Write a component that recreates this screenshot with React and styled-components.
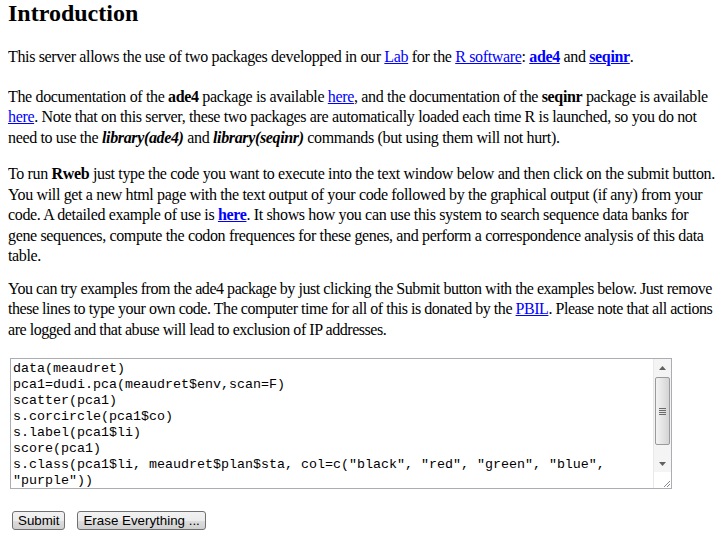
import React from "react";
import styled, { createGlobalStyle } from "styled-components";

const GlobalStyle = createGlobalStyle`
  html, body {
    background: #fff;
  }
  body {
    margin: 0 8px;
    font-family: "Liberation Serif", "Times New Roman", serif;
    font-size: 16px;
    color: #000;
  }
`;

const StyledHeading = styled.h2`
  margin: 0 0 20px;
  font-size: 24px;
  font-weight: bold;
  line-height: 27px;
`;

const StyledPara = styled.p`
  margin: 0 0 ${(p) => p.$gap ?? 16}px;
  line-height: 20.5px;
  letter-spacing: ${(p) => p.$tight ?? -0.35}px;
  white-space: nowrap;
`;

const StyledLink = styled.a`
  color: #0000ff;
  text-decoration: underline;
  font-weight: ${(p) => (p.$bold ? "bold" : "normal")};
  cursor: pointer;
`;

const StyledCode = styled.em`
  font-weight: bold;
  font-style: italic;
`;

const StyledEditor = styled.div`
  display: flex;
  width: 660px;
  height: 129px;
  margin: 0 2px;
  border: 1px solid #abadb3;
  background: #fff;
  overflow: hidden;
`;

const StyledCodeText = styled.pre`
  flex: 1;
  margin: 0;
  padding: 2px 2px;
  font-family: "Liberation Mono", "Courier New", monospace;
  font-size: 13.33px;
  line-height: 16px;
  color: #000;
`;

const StyledScrollbar = styled.div`
  display: flex;
  flex-direction: column;
  width: 17px;
  background: #f4f4f4;
  border-left: 1px solid #e8e8e8;
`;

const StyledArrow = styled.div`
  height: 17px;
  display: flex;
  align-items: center;
  justify-content: center;
`;

const StyledTrack = styled.div`
  flex: 1;
  padding: 1px;
`;

const StyledThumb = styled.div`
  height: 66px;
  border: 1px solid #9a9a9a;
  border-radius: 2px;
  background: linear-gradient(to right, #f3f3f3, #e4e4e4 50%, #d4d4d4);
  display: flex;
  align-items: center;
  justify-content: center;
`;

const StyledGrip = styled.div`
  width: 7px;
  height: 7px;
  background: repeating-linear-gradient(
    to bottom,
    #6a6a6a 0,
    #6a6a6a 1px,
    transparent 1px,
    transparent 2px
  );
`;

const StyledCorner = styled.div`
  height: 16px;
  background: #fff;
  display: flex;
  align-items: flex-end;
  justify-content: flex-end;
`;

const StyledButtonRow = styled.div`
  display: flex;
  gap: 12px;
  margin: 22px 4px 0;
`;

const StyledButton = styled.button`
  height: 19px;
  padding: 0 5px;
  font-family: "Liberation Sans", Arial, sans-serif;
  font-size: 13.33px;
  line-height: 15px;
  color: #000;
  border: 1px solid #707070;
  border-radius: 3px;
  background: linear-gradient(to bottom, #f2f2f2 0%, #ebebeb 50%, #dddddd 51%, #cfcfcf 100%);
`;

const codeLines = [
  "data(meaudret)",
  "pca1=dudi.pca(meaudret$env,scan=F)",
  "scatter(pca1)",
  "s.corcircle(pca1$co)",
  "s.label(pca1$li)",
  "score(pca1)",
  's.class(pca1$li, meaudret$plan$sta, col=c("black", "red", "green", "blue",',
  '"purple"))',
];

const ArrowUp = () => (
  <svg width="7" height="4" viewBox="0 0 7 4">
    <path d="M0 4 L3.5 0 L7 4 Z" fill="#606060" />
  </svg>
);

const ArrowDown = () => (
  <svg width="7" height="4" viewBox="0 0 7 4">
    <path d="M0 0 L3.5 4 L7 0 Z" fill="#606060" />
  </svg>
);

const ResizeGrip = () => (
  <svg width="10" height="10" viewBox="0 0 10 10">
    <path d="M9 3 L3 9 M9 6 L6 9" stroke="#8a8a8a" strokeWidth="1" />
  </svg>
);

export default function App() {
  return (
    <div>
      <GlobalStyle />
      <StyledHeading>Introduction</StyledHeading>
      <StyledPara $gap={19}>
        This server allows the use of two packages developped in our <StyledLink>Lab</StyledLink> for
        the <StyledLink>R software</StyledLink>: <StyledLink $bold>ade4</StyledLink> and{" "}
        <StyledLink $bold>seqinr</StyledLink>.
      </StyledPara>
      <StyledPara>
        The documentation of the <b>ade4</b> package is available <StyledLink>here</StyledLink>, and
        the documentation of the <b>seqinr</b> package is available
        <br />
        <StyledLink>here</StyledLink>. Note that on this server, these two packages are automatically
        loaded each time R is launched, so you do not
        <br />
        need to use the <StyledCode>library(ade4)</StyledCode> and{" "}
        <StyledCode>library(seqinr)</StyledCode> commands (but using them will not hurt).
      </StyledPara>
      <StyledPara $gap={12}>
        To run <b>Rweb</b> just type the code you want to execute into the text window below and then
        click on the submit button.
        <br />
        You will get a new html page with the text output of your code followed by the graphical
        output (if any) from your
        <br />
        code. A detailed example of use is <StyledLink $bold>here</StyledLink>. It shows how you can
        use this system to search sequence data banks for
        <br />
        gene sequences, compute the codon frequences for these genes, and perform a correspondence
        analysis of this data
        <br />
        table.
      </StyledPara>
      <StyledPara $gap={18} $tight={-0.46}>
        You can try examples from the ade4 package by just clicking the Submit button with the
        examples below. Just remove
        <br />
        these lines to type your own code. The computer time for all of this is donated by
        the <StyledLink>PBIL</StyledLink>. Please note that all actions
        <br />
        are logged and that abuse will lead to exclusion of IP addresses.
      </StyledPara>
      <StyledEditor>
        <StyledCodeText>{codeLines.join("\n")}</StyledCodeText>
        <StyledScrollbar>
          <StyledArrow>
            <ArrowUp />
          </StyledArrow>
          <StyledTrack>
            <StyledThumb>
              <StyledGrip />
            </StyledThumb>
          </StyledTrack>
          <StyledArrow>
            <ArrowDown />
          </StyledArrow>
          <StyledCorner>
            <ResizeGrip />
          </StyledCorner>
        </StyledScrollbar>
      </StyledEditor>
      <StyledButtonRow>
        <StyledButton>Submit</StyledButton>
        <StyledButton>Erase Everything ...</StyledButton>
      </StyledButtonRow>
    </div>
  );
}
